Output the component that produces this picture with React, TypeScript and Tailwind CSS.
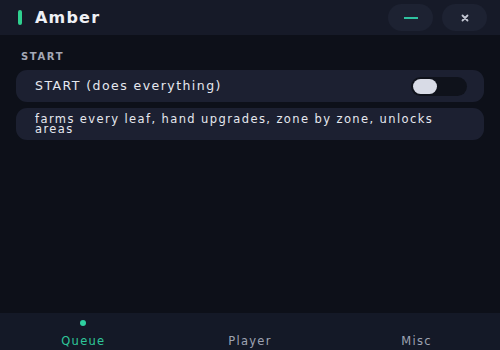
export default function App() {
    return (
        <div className="w-[500px] h-[350px] flex flex-col bg-[#0d1019] text-[#e4e6ee] overflow-hidden" style={{ fontFamily: '"DejaVu Sans", "Noto Sans", sans-serif' }}>
            <header className="h-[35px] flex items-center justify-between bg-[#161a28] pl-[18px] pr-[13px]">
                <div className="flex items-center gap-[13px]">
                    <div className="w-[4px] h-[15px] rounded-full bg-[#2fd08f]" />
                    <h1 className="text-[16px] font-bold tracking-[1.2px] text-[#eef0f5]">Amber</h1>
                </div>
                <div className="flex items-center gap-[9px]">
                    <button className="w-[45px] h-[27px] rounded-full bg-[#1d2232] flex items-center justify-center">
                        <span className="block w-[14px] h-[2px] bg-[#2fc2a0]" />
                    </button>
                    <button className="w-[45px] h-[27px] rounded-full bg-[#1d2232] flex items-center justify-center text-[#c3c7d3]">
                        <svg width="8" height="8" viewBox="0 0 8 8" stroke="currentColor" strokeWidth="1.8" strokeLinecap="round">
                            <path d="M1.5 1.5 6.5 6.5M6.5 1.5 1.5 6.5" />
                        </svg>
                    </button>
                </div>
            </header>

            <main className="flex-1 px-[16px] pt-[16px]">
                <div className="pl-[5px] text-[10px] leading-[12px] font-semibold tracking-[1.6px] text-[#a4a8b6] mb-[7px]">START</div>
                <div className="h-[32px] rounded-[11px] bg-[#1c2031] flex items-center justify-between pl-[19px] pr-[17px]">
                    <span className="text-[12.5px] tracking-[1.45px] text-[#e6e8ef]">START (does everything)</span>
                    <div className="w-[56px] h-[19px] rounded-full bg-[#0f121b] flex items-center pl-[2px]">
                        <div className="w-[24px] h-[15px] rounded-full bg-[#d8dbe6]" />
                    </div>
                </div>
                <div className="mt-[6px] rounded-[11px] bg-[#1c2031] pl-[19px] pr-[30px] pt-[6px] pb-[6px] text-[11.5px] tracking-[1.4px] leading-[10px] text-[#e6e8ef]">
                    farms every leaf, hand upgrades, zone by zone, unlocks areas
                </div>
            </main>

            <nav className="h-[37px] grid grid-cols-3 bg-[#141927]">
                <div className="flex flex-col items-center pt-[7px]">
                    <span className="w-[6px] h-[6px] rounded-full bg-[#2fd0a0]" />
                    <span className="mt-[7px] text-[11.5px] tracking-[1.3px] text-[#2fc69a]">Queue</span>
                </div>
                <div className="flex flex-col items-center pt-[20px]">
                    <span className="text-[11.5px] tracking-[1.3px] text-[#9ea3b2]">Player</span>
                </div>
                <div className="flex flex-col items-center pt-[20px]">
                    <span className="text-[11.5px] tracking-[1.3px] text-[#9ea3b2]">Misc</span>
                </div>
            </nav>
        </div>
    );
}
